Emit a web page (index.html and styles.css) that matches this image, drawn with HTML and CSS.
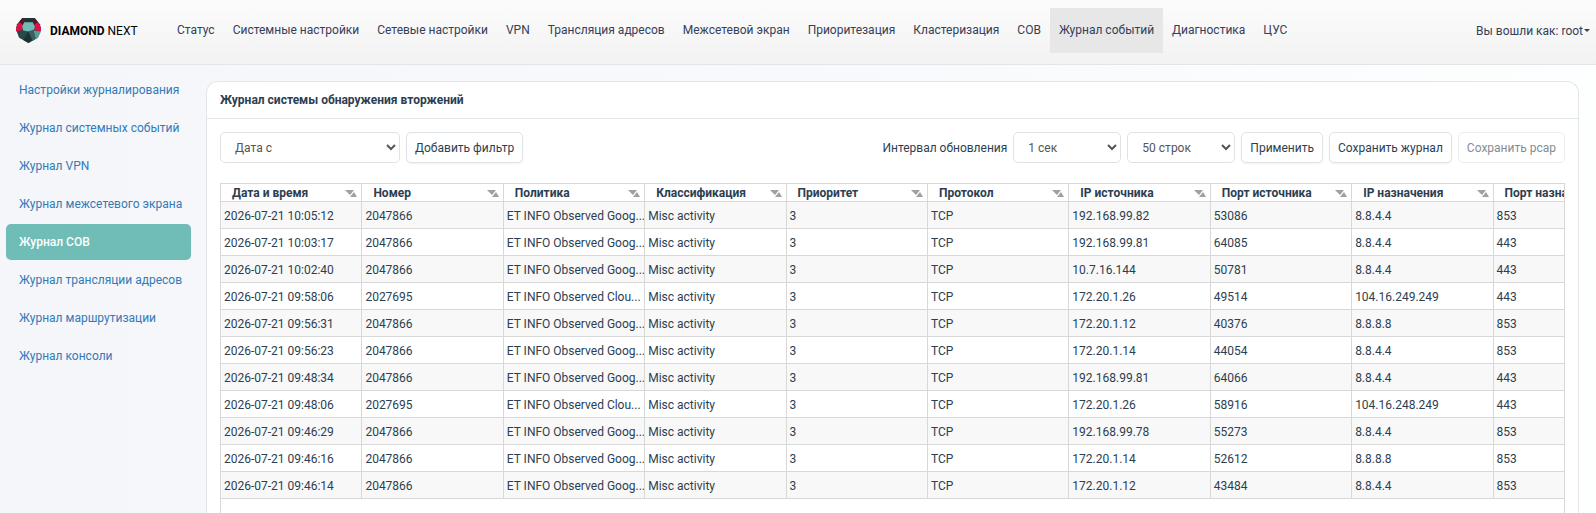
FILE: index.html
```html
<!DOCTYPE html>
<html lang="ru">
<head>
    <meta charset="utf-8">
    <title>Diamond Next</title>
    <link rel="stylesheet" href="styles.css">
</head>
<body>
    <header class="navbar">
        <a class="brand" href="#">
            <svg class="logo" viewBox="0 0 24 24" aria-hidden="true">
                <path fill="#28494a" d="M6 0h12l5 6 1 5-3 8-9 5-9-5-3-8 1-5z"/>
                <path fill="#1d3536" d="M6 0h12l-2 4H8z"/>
                <path fill="#6b0f28" d="M6 0L3 4l3 3 2-3zM18 0l3 4-3 3-2-3z"/>
                <path fill="#dc1148" d="M3 4l3 2 1 5-7 2V9zM21 4l-3 2-1 5 7 2V9z"/>
                <path fill="#70bcb6" d="M8 4h8l2 4-1 4-5 1-5-1-1-4z"/>
                <path fill="#1c3233" d="M12 13l4 8-4 3-5-3z"/>
                <path fill="#38605e" d="M12 13l5-2 3 8-4 3z"/>
                <path fill="#5b9995" d="M17 12l7 1-3 6-2 1z"/>
            </svg>
            <span><b>DIAMOND</b> NEXT</span>
        </a>
        <nav class="menu">
            <a href="#">Статус</a>
            <a href="#">Системные настройки</a>
            <a href="#">Сетевые настройки</a>
            <a href="#">VPN</a>
            <a href="#">Трансляция адресов</a>
            <a href="#">Межсетевой экран</a>
            <a href="#">Приоритезация</a>
            <a href="#">Кластеризация</a>
            <a href="#">СОВ</a>
            <a href="#" class="active">Журнал событий</a>
            <a href="#">Диагностика</a>
            <a href="#">ЦУС</a>
        </nav>
        <button class="user" type="button">Вы вошли как: root<span class="caret"></span></button>
    </header>

    <div class="page">
        <nav class="sidebar">
            <a href="#">Настройки журналирования</a>
            <a href="#">Журнал системных событий</a>
            <a href="#">Журнал VPN</a>
            <a href="#">Журнал межсетевого экрана</a>
            <a href="#" class="active">Журнал СОВ</a>
            <a href="#">Журнал трансляции адресов</a>
            <a href="#">Журнал маршрутизации</a>
            <a href="#">Журнал консоли</a>
        </nav>

        <main class="panel">
            <h1 class="panel-title">Журнал системы обнаружения вторжений</h1>
            <div class="panel-body">
                <div class="toolbar">
                    <select class="filter" aria-label="Фильтр">
                        <option>Дата с</option>
                    </select>
                    <button type="button">Добавить фильтр</button>
                    <label for="interval">Интервал обновления</label>
                    <select id="interval">
                        <option>1 сек</option>
                    </select>
                    <select aria-label="Количество строк">
                        <option>50 строк</option>
                    </select>
                    <button type="button">Применить</button>
                    <button type="button">Сохранить журнал</button>
                    <button type="button" disabled>Сохранить pcap</button>
                </div>
                <div class="grid">
                    <table>
                        <thead>
                            <tr id="head"></tr>
                        </thead>
                        <tbody id="rows"></tbody>
                    </table>
                </div>
            </div>
        </main>
    </div>

    <script src="script.js"></script>
</body>
</html>
```
FILE: styles.css
```css
* {
    box-sizing: border-box;
}
body {
    display: flex;
    flex-direction: column;
    height: 100vh;
    margin: 0;
    overflow: hidden;
    font-family: Roboto, 'Liberation Sans', sans-serif;
    font-size: 12px;
    line-height: 18px;
    color: #2c3e50;
    background: linear-gradient(to right, #f5f6f9, #f8f9fc 50%, #fdfefe);
}
a {
    color: #337ab7;
    text-decoration: none;
}
button, select {
    font: inherit;
    color: inherit;
}

/* top bar */
.navbar {
    display: flex;
    flex: none;
    align-items: flex-start;
    height: 65px;
    padding: 8px 6px 0 16px;
    border-bottom: 1px solid #e1e4e8;
    background: linear-gradient(#fcfcfc, #f2f2f2);
}
.brand {
    display: flex;
    align-items: center;
    gap: 9px;
    width: 152px;
    height: 45px;
    color: #000;
}
.logo {
    width: 25px;
    height: 25px;
}
.menu {
    display: flex;
    flex: 1;
}
.menu a {
    padding: 13px 9px 14px;
    color: #34405a;
    white-space: nowrap;
}
.menu a.active {
    background: #e7e7e7;
}
.user {
    display: flex;
    align-items: center;
    height: 45px;
    padding: 0;
    border: 0;
    background: none;
    color: #34405a;
    white-space: nowrap;
}
.caret {
    margin-left: 1px;
    border: 3px solid transparent;
    border-top-color: #34405a;
    border-bottom: 0;
}

/* layout */
.page {
    display: flex;
    flex: 1;
    gap: 15px;
    min-height: 0;
    padding-right: 17px;
}
.sidebar {
    display: flex;
    flex: none;
    flex-direction: column;
    gap: 2px;
    width: 191px;
    padding: 7px 0 0 6px;
}
.sidebar a {
    padding: 9px 0 9px 13px;
    border-radius: 5px;
    white-space: nowrap;
}
.sidebar a.active {
    background: #70bcb6;
    color: #fff;
    font-weight: 500;
}

/* panel */
.panel {
    display: flex;
    flex: 1;
    flex-direction: column;
    min-width: 0;
    margin-top: 16px;
    border: 1px solid #e3e6e9;
    border-bottom: 0;
    border-radius: 12px 12px 0 0;
    background: #fff;
}
.panel-title {
    margin: 0;
    padding: 9px 13px;
    border-bottom: 1px solid #e3e6e9;
    font-size: 12px;
}
.panel-body {
    display: flex;
    flex: 1;
    flex-direction: column;
    min-height: 0;
    padding: 13px 13px 0;
}
.toolbar {
    display: flex;
    align-items: center;
    gap: 6px;
    margin-bottom: 20px;
}
.toolbar label {
    margin-left: auto;
}
.toolbar select {
    width: 108px;
    height: 31px;
    padding: 0 0 0 10px;
    border: 1px solid #dfe2e6;
    border-radius: 5px;
    background: #fff;
    color: #555;
}
.toolbar .filter {
    width: 180px;
}
.toolbar button {
    height: 31px;
    padding: 0 8px;
    border: 1px solid #dfe2e6;
    border-radius: 5px;
    background: #fff;
    box-shadow: 0 1px 2px rgba(0, 0, 0, 0.06);
    white-space: nowrap;
}
.toolbar button:disabled {
    opacity: 0.6;
    box-shadow: none;
}

/* log table */
.grid {
    flex: 1;
    overflow: hidden;
    border: 1px solid #d8d8d8;
    border-bottom: 0;
}
table {
    width: 1414px;
    table-layout: fixed;
    border-collapse: separate;
    border-spacing: 0;
}
th, td {
    overflow: hidden;
    border-right: 1px solid #d8d8d8;
    border-bottom: 1px solid #d8d8d8;
    text-align: left;
    white-space: nowrap;
}
th {
    height: 18px;
    padding: 1px 4px 0 11px;
    line-height: 16px;
}
.head-cell {
    display: flex;
    align-items: center;
    justify-content: space-between;
}
.sort {
    width: 12px;
    height: 7px;
    fill: #a0a0a0;
}
td {
    height: 27px;
    padding: 5px 0 3px 3px;
}
tbody tr:nth-child(odd) {
    background: #f8f8f8;
}
```
FILE: script.js
```js
const columns = [
    "Дата и время", "Номер", "Политика", "Классификация", "Приоритет",
    "Протокол", "IP источника", "Порт источника", "IP назначения", "Порт назначения"
];

const GOOG = "ET INFO Observed Goog...";
const CLOU = "ET INFO Observed Clou...";

// time, id, policy, source ip, source port, destination ip, destination port
const events = [
    ["10:05:12", "2047866", GOOG, "192.168.99.82", "53086", "8.8.4.4", "853"],
    ["10:03:17", "2047866", GOOG, "192.168.99.81", "64085", "8.8.4.4", "443"],
    ["10:02:40", "2047866", GOOG, "10.7.16.144", "50781", "8.8.4.4", "443"],
    ["09:58:06", "2027695", CLOU, "172.20.1.26", "49514", "104.16.249.249", "443"],
    ["09:56:31", "2047866", GOOG, "172.20.1.12", "40376", "8.8.8.8", "853"],
    ["09:56:23", "2047866", GOOG, "172.20.1.14", "44054", "8.8.4.4", "853"],
    ["09:48:34", "2047866", GOOG, "192.168.99.81", "64066", "8.8.4.4", "443"],
    ["09:48:06", "2027695", CLOU, "172.20.1.26", "58916", "104.16.248.249", "443"],
    ["09:46:29", "2047866", GOOG, "192.168.99.78", "55273", "8.8.4.4", "853"],
    ["09:46:16", "2047866", GOOG, "172.20.1.14", "52612", "8.8.8.8", "853"],
    ["09:46:14", "2047866", GOOG, "172.20.1.12", "43484", "8.8.4.4", "853"]
];

const sortIcon = '<svg class="sort" viewBox="0 0 12 7" aria-hidden="true">' +
    '<path d="M0 0h9L5 5zM5 7h7L9 2z"/></svg>';

document.getElementById("head").innerHTML = columns
    .map(name => `<th><div class="head-cell">${name}${sortIcon}</div></th>`)
    .join("");

document.getElementById("rows").innerHTML = events.map(e => {
    const cells = ["2026-07-21 " + e[0], e[1], e[2], "Misc activity", "3", "TCP", e[3], e[4], e[5], e[6]];
    return "<tr>" + cells.map(c => `<td>${c}</td>`).join("") + "</tr>";
}).join("");
```
